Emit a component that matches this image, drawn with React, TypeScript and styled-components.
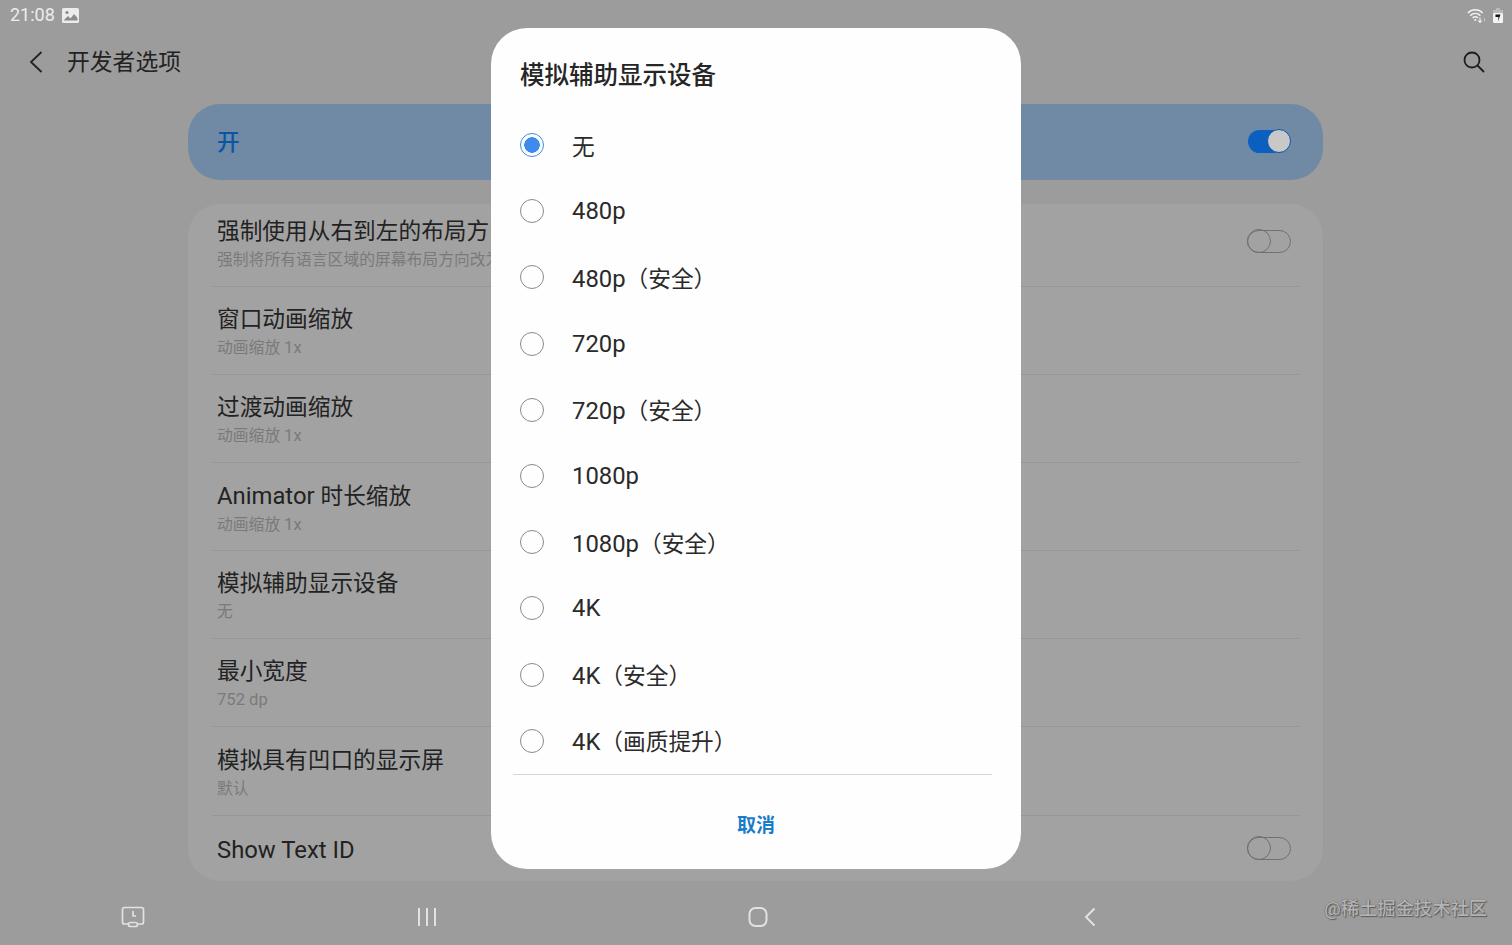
import { FC } from 'react'
import styled, { createGlobalStyle } from 'styled-components'

const GlobalStyle = createGlobalStyle`
  html, body {
    margin: 0;
    padding: 0;
    height: 945px;
    overflow: hidden;
    background: #9c9c9c;
    font-family: Roboto, "Noto Sans CJK SC", sans-serif;
  }
`

const Page = styled.div`
  position: relative;
  width: 1512px;
  height: 945px;
  display: flex;
  flex-direction: column;
  background: #9c9c9c;
  overflow: hidden;
`

const StatusBar = styled.div`
  height: 30px;
  flex: none;
  display: flex;
  align-items: center;
  justify-content: space-between;
  padding: 0 9px 0 10px;
  color: #ececec;
`

const StatusGroup = styled.div`
  display: flex;
  align-items: center;
  gap: 7px;
`

const Clock = styled.span`
  font-size: 18px;
  line-height: 30px;
`

const Header = styled.header`
  height: 64px;
  flex: none;
  display: flex;
  align-items: center;
  padding: 0 27px 0 29px;
  color: #1e1e1e;
`

const HeaderTitle = styled.h1`
  flex: 1;
  margin: 0 0 3px 24px;
  font-size: 22.8px;
  font-weight: 400;
  color: #222;
`

const Content = styled.main`
  flex: 1;
  display: flex;
  flex-direction: column;
  gap: 24px;
  margin: 10px 189px 0 188px;
`

const MasterBar = styled.div`
  height: 76px;
  flex: none;
  box-sizing: border-box;
  display: flex;
  align-items: center;
  justify-content: space-between;
  padding: 0 33px 2px 29px;
  border-radius: 32px;
  background: #708aa6;
  color: #0a56a3;
  font-size: 22.7px;
  font-weight: 500;
`

const MasterLabel = styled.span`
  margin-bottom: 2px;
`

const Card = styled.section`
  height: 677px;
  flex: none;
  padding: 0 23px 0 24px;
  border-radius: 32px;
  background: #a2a2a2;
  box-sizing: border-box;
`

const Row = styled.div<{ $height: number }>`
  height: ${(p) => p.$height}px;
  box-sizing: border-box;
  display: flex;
  align-items: center;
  justify-content: space-between;
  padding: 0 9px 0 5px;
  border-bottom: 1px solid #969696;
  &:last-child {
    border-bottom: none;
  }
`

const RowText = styled.div<{ $shift: number }>`
  display: flex;
  flex-direction: column;
  gap: 4px;
  margin-top: ${(p) => p.$shift}px;
  white-space: nowrap;
`

const RowTitle = styled.div`
  font-size: 22.7px;
  line-height: 28px;
  color: #222;
`

const RowSub = styled.div`
  font-size: 15.8px;
  line-height: 20px;
  color: #7a7a7a;
`

const Latin = styled.span`
  font-size: 1.05em;
`

const TrackOn = styled.div`
  position: relative;
  width: 42px;
  height: 23px;
  border-radius: 12px;
  background: #0b60bf;
`

const ThumbOn = styled.div`
  position: absolute;
  right: -1px;
  top: -1px;
  width: 22px;
  height: 22px;
  border: 1.5px solid #0b56a8;
  border-radius: 50%;
  background: #c8c8c8;
`

const TrackOff = styled.div<{ $lift: number }>`
  position: relative;
  width: 42px;
  height: 21px;
  margin-bottom: ${(p) => p.$lift}px;
  border: 1.5px solid #707070;
  border-radius: 12px;
`

const ThumbOff = styled.div`
  position: absolute;
  left: -1.5px;
  top: -2px;
  width: 22px;
  height: 22px;
  border: 1.5px solid #707070;
  border-radius: 50%;
`

const NavBar = styled.nav`
  flex: 1;
  display: grid;
  grid-template-columns: 266px 322px 340px 324px;
  align-items: center;
  padding-top: 8px;
  color: #e2e2e2;
`

const NavItem = styled.div`
  display: flex;
  justify-content: center;
  align-items: center;
`

const Watermark = styled.div`
  position: absolute;
  right: 25px;
  top: 898px;
  font-size: 18.3px;
  line-height: 22px;
  font-weight: 500;
  color: #b4b4b4;
  text-shadow: 0 0 1px #4c4c4c, 1px 1px 1px #5e5e5e;
  white-space: nowrap;
`

const Dialog = styled.div`
  position: absolute;
  left: 491px;
  top: 28px;
  width: 530px;
  height: 841px;
  display: flex;
  flex-direction: column;
  box-sizing: border-box;
  padding: 0 29px 0 22px;
  border-radius: 36px;
  background: #fefefe;
`

const DialogTitle = styled.h2`
  height: 84px;
  margin: 0;
  padding: 31px 0 0 7px;
  box-sizing: border-box;
  font-size: 24.5px;
  line-height: 34px;
  font-weight: 500;
  color: #262626;
`

const OptionList = styled.div`
  display: flex;
  flex-direction: column;
  border-bottom: 1px solid #d6d6d6;
`

const Option = styled.div`
  height: 66.2px;
  display: flex;
  align-items: center;
  gap: 28.5px;
  padding-left: 6.5px;
  font-size: 22.7px;
  color: #2a2a2a;
`

const OptionLabel = styled.span`
  white-space: nowrap;
`

const Radio = styled.span<{ $checked?: boolean }>`
  width: 24px;
  height: 24px;
  flex: none;
  box-sizing: border-box;
  border-radius: 50%;
  border: 1.5px solid ${(p) => (p.$checked ? '#3e8bee' : '#8a8a8a')};
  background: ${(p) => (p.$checked ? 'radial-gradient(circle, #3e8bee 0 7.5px, #fefefe 8px)' : '#fefefe')};
`

const CancelWrap = styled.div`
  flex: 1;
  display: flex;
  justify-content: center;
  align-items: center;
  padding: 4px 0 0 7px;
`

const CancelButton = styled.button`
  border: none;
  background: none;
  padding: 0;
  font-family: inherit;
  font-size: 19px;
  font-weight: 700;
  color: #1a7cc9;
`

// the original's latin glyphs run a little wider than Roboto next to the CJK text
const Mixed: FC<{ text: string }> = ({ text }) => (
  <>
    {text.split(/([A-Za-z0-9][A-Za-z0-9 ]*)/).map((part, i) =>
      i % 2 === 1 ? <Latin key={i}>{part}</Latin> : part,
    )}
  </>
)

const ToggleOn: FC = () => (
  <TrackOn>
    <ThumbOn />
  </TrackOn>
)

const ToggleOff: FC<{ lift: number }> = ({ lift }) => (
  <TrackOff $lift={lift}>
    <ThumbOff />
  </TrackOff>
)

const rows = [
  { title: '强制使用从右到左的布局方向', sub: '强制将所有语言区域的屏幕布局方向改为从右到左', height: 83, shift: -3, toggle: true, lift: 8 },
  { title: '窗口动画缩放', sub: '动画缩放 1x', height: 88.1, shift: 3 },
  { title: '过渡动画缩放', sub: '动画缩放 1x', height: 88.1, shift: 3 },
  { title: 'Animator 时长缩放', sub: '动画缩放 1x', height: 88.1, shift: 3 },
  { title: '模拟辅助显示设备', sub: '无', height: 88.1, shift: 3 },
  { title: '最小宽度', sub: '752 dp', height: 88.1, shift: 3 },
  { title: '模拟具有凹口的显示屏', sub: '默认', height: 88.1, shift: 3 },
  { title: 'Show Text ID', height: 66, shift: 3, toggle: true, lift: 0 },
]

const options = ['无', '480p', '480p（安全）', '720p', '720p（安全）', '1080p', '1080p（安全）', '4K', '4K（安全）', '4K（画质提升）']

const App: FC = () => (
  <Page>
    <GlobalStyle />
    <StatusBar>
      <StatusGroup>
        <Clock>21:08</Clock>
        <svg width="17" height="15" viewBox="0 0 17 15">
          <rect width="17" height="15" rx="1.5" fill="#ececec" />
          <circle cx="5" cy="4.5" r="1.6" fill="#8c8c8c" />
          <path d="M1.5 12.5 6 8l2.5 2.5L12 6l3.5 4v2.5z" fill="#8c8c8c" />
        </svg>
      </StatusGroup>
      <StatusGroup>
        <svg width="19" height="15" viewBox="0 0 19 15" fill="none" stroke="#f2f2f2" strokeWidth="1.5">
          <path d="M.8 5C5 .8 11.5.8 15.8 5" />
          <path d="M3.2 7.6C6.2 4.8 10.4 4.8 13.4 7.6" />
          <path d="M5.6 10C7.2 8.6 9.4 8.6 11 10" />
          <circle cx="8.3" cy="12" r="1.1" fill="#f2f2f2" stroke="none" />
          <path d="M13 9.5v5M11.3 12.6l1.7 1.8 1.7-1.8" strokeWidth="1.1" />
          <path d="M17.5 10v3.5" strokeWidth="1.1" stroke="#c4c4c4" />
        </svg>
        <svg width="10" height="15" viewBox="0 0 10 15">
          <rect x="3" y="0" width="4" height="3" fill="#b9b9b9" />
          <rect x="0" y="2" width="10" height="3" fill="#b9b9b9" />
          <rect x="0" y="5" width="10" height="10" rx="1" fill="#f4f4f4" />
          <path d="M2.5 6.5h5L5 13.5 5.5 9H2.5z" fill="#111" />
        </svg>
      </StatusGroup>
    </StatusBar>

    <Header>
      <svg width="14" height="24" viewBox="0 0 14 24" fill="none" stroke="#222" strokeWidth="1.8">
        <path d="M12.5 2 2 12l10.5 10" />
      </svg>
      <HeaderTitle>开发者选项</HeaderTitle>
      <svg width="22" height="22" viewBox="0 0 22 22" fill="none" stroke="#1e1e1e" strokeWidth="1.8">
        <circle cx="9" cy="9" r="7.5" />
        <path d="m14.5 14.5 6.5 6.5" />
      </svg>
    </Header>

    <Content>
      <MasterBar>
        <MasterLabel>开</MasterLabel>
        <ToggleOn />
      </MasterBar>
      <Card>
        {rows.map((row) => (
          <Row key={row.title} $height={row.height}>
            <RowText $shift={row.shift}>
              <RowTitle>
                <Mixed text={row.title} />
              </RowTitle>
              {row.sub && (
                <RowSub>
                  <Mixed text={row.sub} />
                </RowSub>
              )}
            </RowText>
            {row.toggle && <ToggleOff lift={row.lift ?? 0} />}
          </Row>
        ))}
      </Card>
    </Content>

    <NavBar>
      <NavItem>
        <svg width="24" height="22" viewBox="0 0 24 22" fill="none" stroke="currentColor" strokeWidth="1.7">
          <path d="M7 18H3.5A2 2 0 0 1 1.5 16V3.5A2 2 0 0 1 3.5 1.5h17a2 2 0 0 1 2 2V16a2 2 0 0 1-2 2H17" />
          <path d="M12 5v5h3" />
          <rect x="7.5" y="16.5" width="9" height="4" rx="2" />
        </svg>
      </NavItem>
      <NavItem>
        <svg width="20" height="20" viewBox="0 0 20 20" fill="none" stroke="currentColor" strokeWidth="2">
          <path d="M2 1v18M10 1v18M18 1v18" />
        </svg>
      </NavItem>
      <NavItem>
        <svg width="20" height="20" viewBox="0 0 20 20" fill="none" stroke="currentColor" strokeWidth="2">
          <rect x="1.5" y="1" width="17" height="18" rx="6" />
        </svg>
      </NavItem>
      <NavItem>
        <svg width="12" height="20" viewBox="0 0 12 20" fill="none" stroke="currentColor" strokeWidth="2">
          <path d="M10.5 1.5 2 10l8.5 8.5" />
        </svg>
      </NavItem>
    </NavBar>

    <Watermark>@稀土掘金技术社区</Watermark>

    <Dialog>
      <DialogTitle>模拟辅助显示设备</DialogTitle>
      <OptionList>
        {options.map((label, i) => (
          <Option key={label}>
            <Radio $checked={i === 0} />
            <OptionLabel>
              <Mixed text={label} />
            </OptionLabel>
          </Option>
        ))}
      </OptionList>
      <CancelWrap>
        <CancelButton>取消</CancelButton>
      </CancelWrap>
    </Dialog>
  </Page>
)

export default App
